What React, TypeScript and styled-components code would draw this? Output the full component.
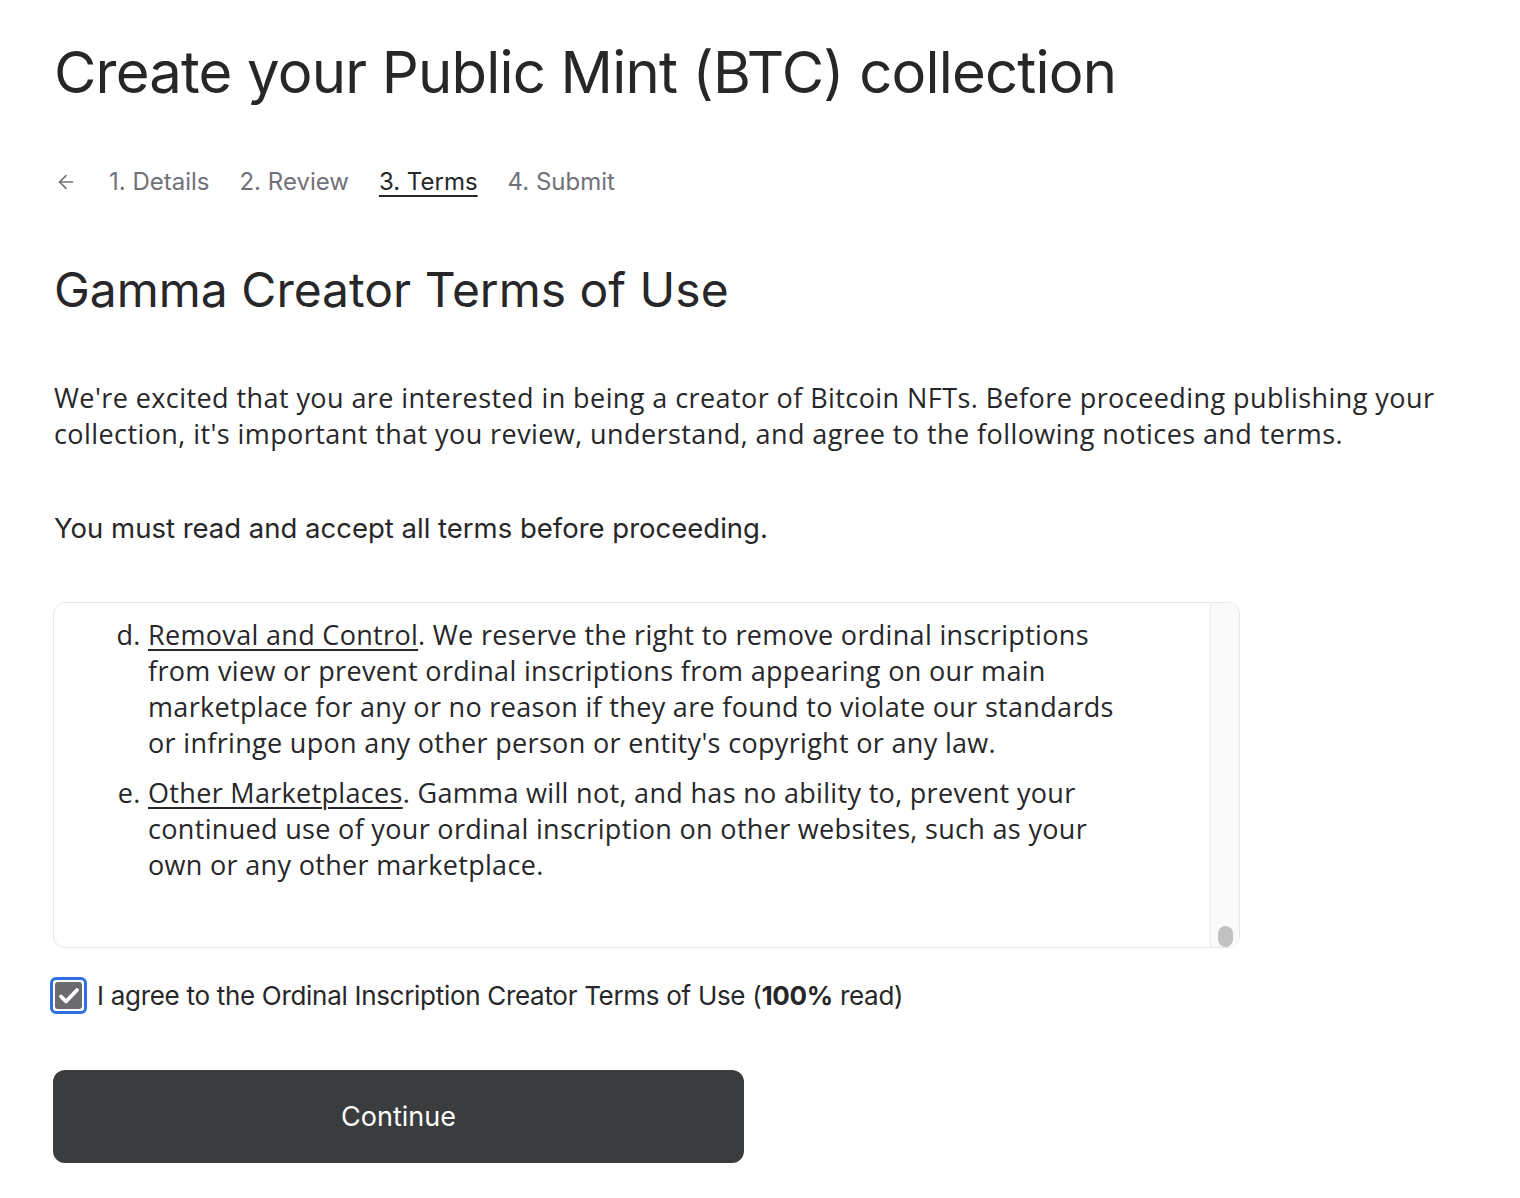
import React, { useLayoutEffect, useRef } from "react";
import styled, { createGlobalStyle } from "styled-components";
import { ArrowLeft } from "lucide-react";

const Global = createGlobalStyle`
  html, body { margin: 0; padding: 0; background: #ffffff; }
  body { font-family: Inter, "Liberation Sans", sans-serif; color: #27272a; }
  * { box-sizing: border-box; }
`;

const Page = styled.main`
  padding: 34px 0 40px 54px;
  width: 1520px;
`;

const Title = styled.h1`
  margin: 0;
  font-family: Inter, "Liberation Sans", sans-serif;
  font-weight: 400;
  font-size: 58px;
  line-height: 76px;
  letter-spacing: -0.8px;
  color: #27272a;
`;

const Steps = styled.nav`
  display: flex;
  align-items: center;
  gap: 30px;
  margin-top: 52px;
  height: 40px;
`;

const BackButton = styled.button`
  all: unset;
  display: flex;
  align-items: center;
  color: #71717a;
  margin-left: 1px;
  margin-right: 2px;
`;

const Step = styled.span<{ $active?: boolean }>`
  font-size: 24px;
  line-height: 32px;
  color: ${(p) => (p.$active ? "#27272a" : "#71717a")};
  text-decoration: ${(p) => (p.$active ? "underline" : "none")};
  text-underline-offset: 5px;
  text-decoration-thickness: 2px;
`;

const Heading = styled.h2`
  margin: 58px 0 0;
  font-weight: 400;
  font-size: 48px;
  line-height: 60px;
  letter-spacing: 0;
  color: #27272a;
`;

const Intro = styled.p`
  margin: 60px 0 0;
  font-family: "Open Sans", "Noto Sans", sans-serif;
  font-size: 27px;
  line-height: 36px;
  letter-spacing: 0.42px;
  color: #27272a;
  max-width: 1440px;
`;

const Notice = styled.p`
  margin: 58px 0 0;
  font-size: 27.5px;
  line-height: 36px;
  color: #27272a;
`;

const TermsFrame = styled.div`
  margin: 56px 0 0 -1px;
  width: 1187px;
  height: 346px;
  border: 1px solid #e7e7e9;
  border-radius: 12px;
  overflow: hidden;
  display: flex;
`;

const ScrollArea = styled.div`
  flex: 1;
  overflow-y: auto;
  scrollbar-width: none;
  &::-webkit-scrollbar { display: none; }
  font-family: "Open Sans", "Noto Sans", sans-serif;
  font-size: 27px;
  line-height: 36px;
  letter-spacing: 0.32px;
  color: #27272a;
`;

const ScrollTrack = styled.div`
  width: 29px;
  flex: none;
  background: #fafafa;
  border-left: 1px solid #ececec;
  display: flex;
  align-items: flex-end;
  padding: 0 6px 0 7px;
`;

const ScrollThumb = styled.div`
  width: 15px;
  height: 21px;
  border-radius: 8px;
  background: #c1c1c1;
`;

const TermsInner = styled.div`
  padding: 14px 80px 64px 42px;
`;

const Section = styled.section`
  margin-bottom: 24px;
`;

const SectionTitle = styled.h3`
  margin: 0 0 12px;
  font-size: 27px;
  line-height: 36px;
  font-weight: 700;
`;

const Para = styled.p`
  margin: 0 0 14px;
`;

const List = styled.ol`
  margin: 0;
  padding-left: 52px;
`;

const Item = styled.li`
  margin-bottom: 14px;
  &:last-child { margin-bottom: 0; }
  &::marker { content: counter(list-item, lower-alpha) ". "; }
`;

const Term = styled.span`
  text-decoration: underline;
  text-underline-offset: 4px;
  text-decoration-thickness: 2px;
`;

const AgreeRow = styled.label`
  display: flex;
  align-items: center;
  gap: 10px;
  margin-top: 29px;
  margin-left: -4px;
  cursor: pointer;
`;

const HiddenInput = styled.input`
  position: absolute;
  opacity: 0;
  width: 0;
  height: 0;
`;

const Box = styled.span`
  width: 37px;
  height: 37px;
  border: 3px solid #2f6fe0;
  border-radius: 6px;
  padding: 2px;
  display: flex;
`;

const BoxFill = styled.span`
  flex: 1;
  background: #6b6b70;
  border-radius: 3px;
  display: flex;
  align-items: center;
  justify-content: center;
`;

const AgreeText = styled.span`
  font-size: 26px;
  line-height: 36px;
  letter-spacing: -0.3px;
  color: #27272a;
  b { font-weight: 700; }
`;

const Continue = styled.button`
  all: unset;
  margin-top: 56px;
  margin-left: -1px;
  width: 691px;
  height: 93px;
  border-radius: 12px;
  background: #3b3c3e;
  color: #ffffff;
  font-family: Inter, "Liberation Sans", sans-serif;
  font-size: 27px;
  display: flex;
  align-items: center;
  justify-content: center;
  cursor: pointer;
`;

const sections = [
  {
    title: "1. Acceptance of Terms",
    paras: [
      "These Ordinal Inscription Creator Terms of Use govern your use of Gamma's tools for creating, publishing, and minting ordinal inscription collections on the Bitcoin network. By publishing a collection, you agree to be bound by these terms.",
      "If you do not agree to these terms, you may not publish a collection using Gamma's services.",
    ],
  },
  {
    title: "2. Your Content",
    paras: [
      "You represent and warrant that you own or have all necessary rights to the content you inscribe, and that the content does not infringe upon the intellectual property, privacy, or other rights of any person or entity.",
      "You are solely responsible for the content of your ordinal inscriptions, including any metadata, descriptions, and images associated with your collection.",
    ],
  },
  {
    title: "3. Permanence of Inscriptions",
    paras: [
      "Ordinal inscriptions are recorded on the Bitcoin blockchain and cannot be modified or deleted once confirmed. You acknowledge that Gamma has no ability to alter, reverse, or remove an inscription after it has been broadcast to the network.",
    ],
  },
  {
    title: "4. Fees",
    paras: [
      "Network fees are determined by the Bitcoin network and are outside of Gamma's control. Service fees, if any, will be disclosed to you before you submit your collection. All fees are non-refundable.",
    ],
  },
];

export default function App() {
  const boxRef = useRef<HTMLDivElement>(null);

  useLayoutEffect(() => {
    const el = boxRef.current;
    if (el) el.scrollTop = el.scrollHeight;
  }, []);

  return (
    <>
      <Global />
      <Page>
        <Title>Create your Public Mint (BTC) collection</Title>
        <Steps>
          <BackButton aria-label="Back">
            <ArrowLeft size={22} strokeWidth={1.8} />
          </BackButton>
          <Step>1. Details</Step>
          <Step>2. Review</Step>
          <Step $active>3. Terms</Step>
          <Step>4. Submit</Step>
        </Steps>
        <Heading>Gamma Creator Terms of Use</Heading>
        <Intro>
          We're excited that you are interested in being a creator of Bitcoin NFTs. Before proceeding publishing your
          collection, it's important that you review, understand, and agree to the following notices and terms.
        </Intro>
        <Notice>You must read and accept all terms before proceeding.</Notice>
        <TermsFrame>
          <ScrollArea ref={boxRef}>
            <TermsInner>
              {sections.map((s) => (
                <Section key={s.title}>
                  <SectionTitle>{s.title}</SectionTitle>
                  {s.paras.map((p, i) => (
                    <Para key={i}>{p}</Para>
                  ))}
                </Section>
              ))}
              <SectionTitle>5. Marketplace Standards</SectionTitle>
              <List>
                <Item>
                  <Term>Standards</Term>. Gamma maintains content standards for collections displayed on our
                  marketplace, which may be updated from time to time.
                </Item>
                <Item>
                  <Term>Review</Term>. We may review your collection before or after it is published to determine
                  whether it complies with our standards.
                </Item>
                <Item>
                  <Term>Reporting</Term>. Users may report collections that they believe violate our standards or
                  applicable law.
                </Item>
                <Item>
                  <Term>Removal and Control</Term>. We reserve the right to remove ordinal inscriptions from view or
                  prevent ordinal inscriptions from appearing on our main marketplace for any or no reason if they are
                  found to violate our standards or infringe upon any other person or entity's copyright or any law.
                </Item>
                <Item>
                  <Term>Other Marketplaces</Term>. Gamma will not, and has no ability to, prevent your continued use
                  of your ordinal inscription on other websites, such as your own or any other marketplace.
                </Item>
              </List>
            </TermsInner>
          </ScrollArea>
          <ScrollTrack aria-hidden>
            <ScrollThumb />
          </ScrollTrack>
        </TermsFrame>
        <AgreeRow>
          <HiddenInput type="checkbox" defaultChecked />
          <Box>
            <BoxFill>
              <svg width="24" height="24" viewBox="0 0 24 24" fill="none">
                <path d="M4 12.5l5 5L20 6" stroke="#fff" strokeWidth="3.8" strokeLinecap="round" strokeLinejoin="round" />
              </svg>
            </BoxFill>
          </Box>
          <AgreeText>
            I agree to the Ordinal Inscription Creator Terms of Use (<b>100%</b> read)
          </AgreeText>
        </AgreeRow>
        <Continue type="button">Continue</Continue>
      </Page>
    </>
  );
}
